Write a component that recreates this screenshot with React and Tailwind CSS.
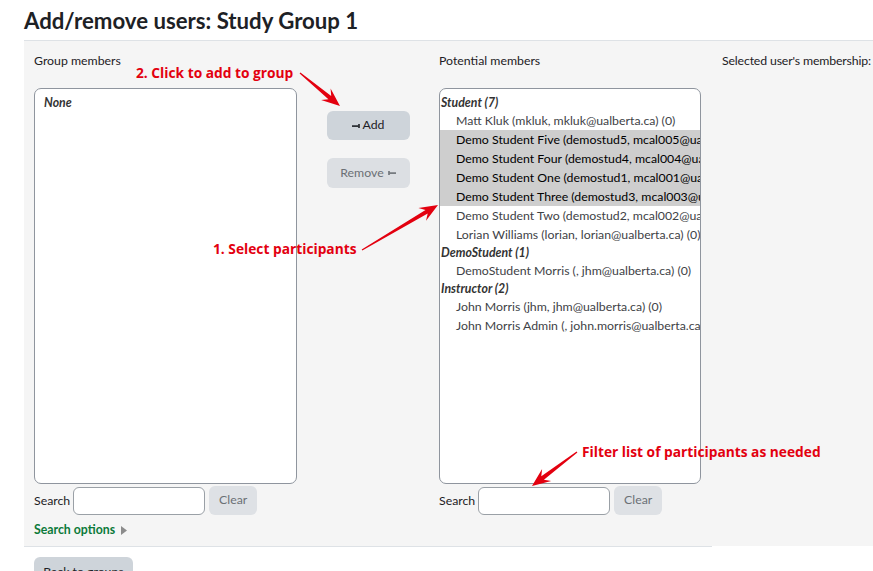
import React from "react";

function arrowPoints(tail, tip, headLen = 17, headW = 7.5, shaftW = 2.2) {
  const dx = tip[0] - tail[0];
  const dy = tip[1] - tail[1];
  const len = Math.sqrt(dx * dx + dy * dy);
  const ux = dx / len;
  const uy = dy / len;
  const px = -uy;
  const py = ux;
  const notch = [tip[0] - ux * headLen * 0.78, tip[1] - uy * headLen * 0.78];
  const barb = [tip[0] - ux * headLen * 1.08, tip[1] - uy * headLen * 1.08];
  const pts = [
    [tail[0] + px * 0.6, tail[1] + py * 0.6],
    [notch[0] + px * shaftW, notch[1] + py * shaftW],
    [barb[0] + px * headW, barb[1] + py * headW],
    tip,
    [barb[0] - px * headW, barb[1] - py * headW],
    [notch[0] - px * shaftW, notch[1] - py * shaftW],
    [tail[0] - px * 0.6, tail[1] - py * 0.6],
  ];
  return pts.map((p) => `${p[0].toFixed(1)},${p[1].toFixed(1)}`).join(" ");
}

const students = [
  { name: "Matt Kluk (mkluk, mkluk@ualberta.ca) (0)" },
  { name: "Demo Student Five (demostud5, mcal005@ualberta.ca) (0)", sel: true },
  { name: "Demo Student Four (demostud4, mcal004@ualberta.ca) (0)", sel: true },
  { name: "Demo Student One (demostud1, mcal001@ualberta.ca) (0)", sel: true },
  { name: "Demo Student Three (demostud3, mcal003@ualberta.ca) (0)", sel: true },
  { name: "Demo Student Two (demostud2, mcal002@ualberta.ca) (0)" },
  { name: "Lorian Williams (lorian, lorian@ualberta.ca) (0)" },
];

function Group({ label, items }) {
  return (
    <div>
      <div className="h-[17px] leading-[17px] pl-[1px] font-bold italic text-[#333]">{label}</div>
      {items.map((it) => (
        <div
          key={it.name}
          className={
            "h-[19px] leading-[19px] pl-[16px] whitespace-nowrap " +
            (it.sel ? "bg-[#cecece] text-black" : "text-[#3e4246]")
          }
        >
          {it.name}
        </div>
      ))}
    </div>
  );
}

function SearchRow() {
  return (
    <div className="mt-[2px] flex items-center h-[29px]">
      <span className="pt-[2px]">Search</span>
      <div className="ml-[3px] w-[132px] h-[28px] bg-white border border-[#9aa0a6] rounded-[6px]" />
      <div className="ml-[4px] w-[48px] h-[29px] rounded-[6px] bg-[#dee1e5] text-[#6b7075] flex items-center justify-center">
        Clear
      </div>
    </div>
  );
}

export default function App() {
  return (
    <div className="relative w-[873px] h-[571px] overflow-hidden bg-white text-[#1d2125] font-['Lato',sans-serif] text-[12.3px]">
      <div className="pl-6">
        <h2 className="pt-[9px] pb-[7px] text-[22.2px] leading-[24px] font-bold">
          Add/remove users: Study Group 1
        </h2>
        <div className="w-[849px] bg-[#f5f5f5] border-t border-[#dee2e6] overflow-hidden">
          <div className="flex pl-[10px] pt-[10px] pb-[6px]">
            <div className="w-[263px] shrink-0 flex flex-col">
              <div className="h-[20px] leading-[20px]">Group members</div>
              <div className="mt-[17px] h-[396px] bg-white border border-[#8f959e] rounded-[7px] pt-[5px] pl-[9px] overflow-hidden">
                <div className="h-[17px] leading-[17px] font-bold italic text-[#333]">None</div>
              </div>
              <SearchRow />
              <div className="mt-[5px] h-[20px] flex items-center">
                <span className="font-bold text-[#0c7a3a]">Search options</span>
                <svg width="7" height="9" viewBox="0 0 7 9" className="ml-[6px]">
                  <polygon points="0,0 6,4.5 0,9" fill="#8c8c8c" />
                </svg>
              </div>
            </div>
            <div className="w-[142px] shrink-0 flex flex-col items-center pt-[60px]">
              <div className="w-[83px] h-[29px] rounded-[6px] bg-[#ced4da] flex items-center justify-center gap-[3px] text-[#1d2125]">
                <svg width="8" height="6" viewBox="0 0 8 6">
                  <rect x="0" y="2.3" width="6.5" height="1.6" fill="#1d2125" />
                  <rect x="6.2" y="1" width="1.6" height="4" fill="#1d2125" />
                </svg>
                <span>Add</span>
              </div>
              <div className="mt-[18px] w-[83px] h-[30px] rounded-[6px] bg-[#dcdfe3] flex items-center justify-center gap-[4px] text-[#6b7075]">
                <span>Remove</span>
                <svg width="8" height="6" viewBox="0 0 8 6">
                  <rect x="0.2" y="1" width="1.6" height="4" fill="#6b7075" />
                  <rect x="1.5" y="2.3" width="6.5" height="1.6" fill="#6b7075" />
                </svg>
              </div>
            </div>
            <div className="w-[262px] shrink-0 flex flex-col">
              <div className="h-[20px] leading-[20px]">Potential members</div>
              <div className="mt-[17px] h-[396px] bg-white border border-[#8f959e] rounded-[7px] pt-[5px] overflow-hidden">
                <Group label="Student (7)" items={students} />
                <Group label="DemoStudent (1)" items={[{ name: "DemoStudent Morris (, jhm@ualberta.ca) (0)" }]} />
                <Group
                  label="Instructor (2)"
                  items={[
                    { name: "John Morris (jhm, jhm@ualberta.ca) (0)" },
                    { name: "John Morris Admin (, john.morris@ualberta.ca) (0)" },
                  ]}
                />
              </div>
              <SearchRow />
            </div>
            <div className="ml-[21px] shrink-0">
              <div className="h-[20px] leading-[20px] whitespace-nowrap tracking-[-0.15px]">Selected user's membership:</div>
            </div>
          </div>
        </div>
        <div className="w-[688px] h-px bg-[#dee2e6]" />
        <div className="ml-[10px] mt-[10px] w-[99px] h-[30px] rounded-[6px] bg-[#ced4da] flex items-center justify-center">
          Back to groups
        </div>
      </div>

      {/* annotations */}
      <div className="absolute left-[136px] top-[63px] h-[20px] leading-[20px] text-[13.75px] font-bold text-[#e3000f] font-['Open_Sans',sans-serif] whitespace-nowrap">
        2. Click to add to group
      </div>
      <div className="absolute left-[213px] top-[239px] h-[20px] leading-[20px] text-[13.75px] font-bold text-[#e3000f] font-['Open_Sans',sans-serif] whitespace-nowrap">
        1. Select participants
      </div>
      <div className="absolute left-[582px] top-[442px] h-[20px] leading-[20px] text-[13.75px] font-bold text-[#e3000f] font-['Open_Sans',sans-serif] whitespace-nowrap">
        Filter list of participants as needed
      </div>
      <svg className="absolute left-0 top-0 pointer-events-none" width="873" height="571" viewBox="0 0 873 571">
        <polygon points={arrowPoints([300, 73], [340, 106])} fill="#e3000f" />
        <polygon points={arrowPoints([362, 250], [438, 205])} fill="#e3000f" />
        <polygon points={arrowPoints([577, 452], [532, 486])} fill="#e3000f" />
      </svg>
    </div>
  );
}
